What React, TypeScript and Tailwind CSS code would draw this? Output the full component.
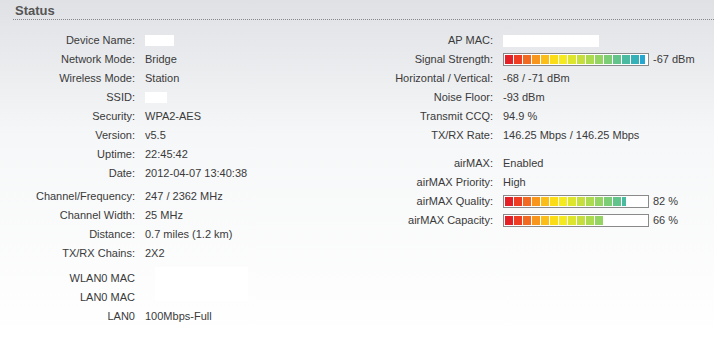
import React from "react";

const COLORS = [
  "#e41f26", "#ee3d22", "#f26a21", "#f7951d", "#fbbd17", "#fcdc17",
  "#f4ea1e", "#dde62d", "#c6df3d", "#addb4f", "#94d462", "#7ccd76",
  "#62c48b", "#4abba1", "#34b2b8", "#26a7d2", "#1e9fe0",
];

function Bar({ fill }: { fill: number }) {
  return (
    <div className="flex h-[13px] w-[146px] border border-[#8a8a8a] bg-white p-[1px]">
      <div className="flex h-full gap-[1px] overflow-hidden" style={{ width: fill }}>
        {COLORS.map((c, i) => (
          <div key={i} className="h-full w-[8px] shrink-0" style={{ backgroundColor: c }} />
        ))}
      </div>
    </div>
  );
}

function Row({ label, children, lw }: { label: string; children?: React.ReactNode; lw: string }) {
  return (
    <div className="flex h-[19px] items-center">
      <div className={`${lw} shrink-0 text-right`}>{label}</div>
      <div className="flex items-center pl-[10px]">{children}</div>
    </div>
  );
}

function Blank({ w }: { w: string }) {
  return <div className={`h-[11px] ${w} bg-white`} />;
}

export default function App() {
  const L = "w-[135px]";
  const R = "w-[133px]";
  return (
    <div
      className="h-[338px] w-[714px] overflow-hidden bg-gradient-to-b from-[#dfe1e5] via-[#f6f7f8] via-40% to-white text-[11px] text-[#3a3a3a]"
      style={{ fontFamily: '"Liberation Sans", Arial, sans-serif' }}
    >
      <div className="pl-[15px] pt-[2px] text-[13px] font-bold leading-[17px] text-[#555]">Status</div>
      <div className="ml-[13px] border-t border-dotted border-[#888]" />
      <div className="flex pt-[11px]">
        <div className="w-[360px] shrink-0">
          <Row lw={L} label="Device Name:"><Blank w="w-[29px]" /></Row>
          <Row lw={L} label="Network Mode:">Bridge</Row>
          <Row lw={L} label="Wireless Mode:">Station</Row>
          <Row lw={L} label="SSID:"><Blank w="w-[22px]" /></Row>
          <Row lw={L} label="Security:">WPA2-AES</Row>
          <Row lw={L} label="Version:">v5.5</Row>
          <Row lw={L} label="Uptime:">22:45:42</Row>
          <Row lw={L} label="Date:">2012-04-07 13:40:38</Row>
          <div className="h-[4px]" />
          <Row lw={L} label="Channel/Frequency:">247 / 2362 MHz</Row>
          <Row lw={L} label="Channel Width:">25 MHz</Row>
          <Row lw={L} label="Distance:">0.7 miles (1.2 km)</Row>
          <Row lw={L} label="TX/RX Chains:">2X2</Row>
          <div className="h-[6px]" />
          <div className="flex">
            <div>
              <Row lw={L} label="WLAN0 MAC" />
              <Row lw={L} label="LAN0 MAC" />
            </div>
            <div className="ml-[10px] mt-[-2px] h-[34px] w-[93px] bg-white" />
          </div>
          <Row lw={L} label="LAN0">100Mbps-Full</Row>
        </div>
        <div className="flex-1">
          <Row lw={R} label="AP MAC:"><div className="h-[12px] w-[96px] bg-white" /></Row>
          <Row lw={R} label="Signal Strength:"><Bar fill={140} /><span className="ml-[4px]">-67 dBm</span></Row>
          <Row lw={R} label="Horizontal / Vertical:">-68 / -71 dBm</Row>
          <Row lw={R} label="Noise Floor:">-93 dBm</Row>
          <Row lw={R} label="Transmit CCQ:">94.9 %</Row>
          <Row lw={R} label="TX/RX Rate:">146.25 Mbps / 146.25 Mbps</Row>
          <div className="h-[9px]" />
          <Row lw={R} label="airMAX:">Enabled</Row>
          <Row lw={R} label="airMAX Priority:">High</Row>
          <Row lw={R} label="airMAX Quality:"><Bar fill={121} /><span className="ml-[4px]">82 %</span></Row>
          <Row lw={R} label="airMAX Capacity:"><Bar fill={98} /><span className="ml-[4px]">66 %</span></Row>
        </div>
      </div>
    </div>
  );
}
